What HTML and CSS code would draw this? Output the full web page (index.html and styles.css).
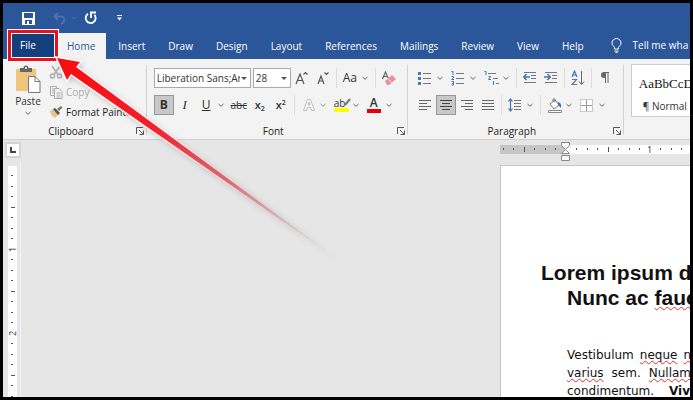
FILE: index.html
```html
<!DOCTYPE html>
<html lang="en">
<head>
  <meta charset="UTF-8">
  <meta name="viewport" content="width=device-width, initial-scale=1.0">
  <title>Word - File tab</title>
  <link rel="stylesheet" href="styles.css">
</head>
<body>
  <!-- shared icons -->
  <svg class="defs" aria-hidden="true">
    <symbol id="chevron" viewBox="0 0 8 8"><path d="M1.500 3l2.500 2.300L6.500 3" fill="none" stroke="#666"/></symbol>
    <symbol id="launcher" viewBox="0 0 8 8"><path d="M.5 7V.5H7M3 3l4 4M7.500 3.500v4h-4" fill="none" stroke="#555"/></symbol>
  </svg>

  <div class="window">
    <header class="titlebar">
      <button class="quick" aria-label="Save">
        <svg width="13" height="13" viewBox="0 0 13 13"><path fill="#fff" fill-rule="evenodd" d="M0 0h13v13H0zM2 1v5h9V1zM3 8v4h2V9h2v3h3V8z"/></svg>
      </button>
      <button class="quick undo" aria-label="Undo">
        <svg width="14" height="13" viewBox="0 0 14 13"><path d="M5 1L1.500 4.500 5 8M2 4.500h6.500a3.500 3.500 0 0 1 1 6.500L8 12" fill="none" stroke="#4a70b2" stroke-width="2"/></svg>
        <svg width="8" height="8"><path d="M2 3l2 2 2-2" fill="none" stroke="#4a70b2"/></svg>
      </button>
      <button class="quick" aria-label="Repeat">
        <svg width="14" height="14" viewBox="0 0 14 14"><path d="M4 2.800a5 5 0 1 0 6.500 1M7 7V1.500h5" fill="none" stroke="#fff" stroke-width="1.800"/></svg>
      </button>
      <button class="quick" aria-label="Customize Quick Access Toolbar">
        <svg width="7" height="8" viewBox="0 0 7 8"><path d="M1 1.500h5" stroke="#fff"/><path d="M1 3.500h5L3.500 6.500z" fill="#fff"/></svg>
      </button>
    </header>

    <nav class="tabs">
      <a href="#" class="tab file">File</a>
      <a href="#" class="tab active">Home</a>
      <a href="#" class="tab">Insert</a>
      <a href="#" class="tab">Draw</a>
      <a href="#" class="tab">Design</a>
      <a href="#" class="tab">Layout</a>
      <a href="#" class="tab">References</a>
      <a href="#" class="tab">Mailings</a>
      <a href="#" class="tab">Review</a>
      <a href="#" class="tab">View</a>
      <a href="#" class="tab">Help</a>
      <a href="#" class="tab tell">
        <svg width="11" height="15" viewBox="0 0 11 15"><path d="M3.500 11V9.500C3 8 1 7.500 1 5a4.500 4.500 0 0 1 9 0c0 2.500-2 3-2.500 4.500V11zM3.500 13h4M4.500 14.500h2" fill="none" stroke="#fff"/></svg>
        Tell me wha
      </a>
    </nav>

    <section class="ribbon">
      <div class="group">
        <div class="clipboard">
          <button class="paste">
            <svg width="26" height="28" viewBox="0 0 26 28">
              <path d="M1 4h20v22H1z" fill="#eec57d"/>
              <path d="M5 7V3h3.500a2.500 2.500 0 0 1 5 0H17v4z" fill="#666"/><circle cx="11" cy="3" r="1" fill="#fff"/>
              <path d="M13.500 11.500H20l5 5v11H13.500z" fill="#fff" stroke="#777"/><path d="M20 11.500v5h5" fill="none" stroke="#777"/>
            </svg>
            <span>Paste</span>
            <svg width="8" height="8"><use href="#chevron"/></svg>
          </button>
          <div class="clip-list">
            <button class="clip off">
              <svg width="14" height="14" viewBox="0 0 14 14" fill="none" stroke="#aaa" stroke-width="1.500"><path d="M3 1l6 8.500M11 1L5 9.500"/><circle cx="3.500" cy="11" r="2"/><circle cx="10.500" cy="11" r="2"/></svg>
            </button>
            <button class="clip off">
              <svg width="14" height="14" viewBox="0 0 14 14" fill="#f6f6f6" stroke="#aaa"><path d="M1.500 1.500h6v9h-6zM3 4h3M3 6h3M3 8h3"/><path d="M5.500 3.500H10l3 3v7H5.500zM7.500 8h4M7.500 10h4M7.500 12h4"/></svg>
              Copy
            </button>
            <button class="clip">
              <svg width="14" height="14" viewBox="0 0 14 14"><path d="M1 6l4-2 5 5-4 4q-4-2-5-7z" fill="#eec08a"/><path d="M4 4l2-1 5 5-2 2z" fill="#555"/><path d="M8 4l4-3 1.500 1.500L10 6z" fill="#777"/></svg>
              Format Painter
            </button>
          </div>
        </div>
        <div class="caption"><span>Clipboard</span><button class="launch" aria-label="Clipboard settings"><svg width="8" height="8"><use href="#launcher"/></svg></button></div>
      </div>

      <div class="group">
        <div class="rows">
          <div class="row">
            <div class="combo family"><select aria-label="Font"><option>Liberation Sans;Ar</option></select></div>
            <div class="combo size"><select aria-label="Font size"><option>28</option></select></div>
            <button class="btn" aria-label="Increase font size">
              <svg width="16" height="16" viewBox="0 0 16 16" fill="none" stroke="#555" stroke-width="1.200"><path d="M2 14L6 4l4 10M3.500 10.500h5"/><path d="M9.500 4.500l2-2 2 2"/></svg>
            </button>
            <button class="btn" aria-label="Decrease font size">
              <svg width="16" height="16" viewBox="0 0 16 16" fill="none" stroke="#555" stroke-width="1.200"><path d="M3 14l3-8 3 8M4.500 11h3.500"/><path d="M9.500 2.500l2 2 2-2"/></svg>
            </button>
            <i class="sep"></i>
            <button class="split" aria-label="Change case"><span class="case">Aa</span><svg width="8" height="8"><use href="#chevron"/></svg></button>
            <i class="sep"></i>
            <button class="btn" aria-label="Clear formatting">
              <svg width="16" height="16" viewBox="0 0 16 16"><path d="M1.500 9l3-7 3 7M2.500 6.500h4" fill="none" stroke="#666" stroke-width="1.200"/><path d="M4 11l7-6 4 4-7 6H6z" fill="#e8909d"/><path d="M6.500 8.500l4 4" stroke="#fff"/></svg>
            </button>
          </div>
          <div class="row">
            <button class="btn on bold" aria-pressed="true">B</button>
            <button class="btn italic">I</button>
            <button class="split"><span class="underline">U</span><svg width="8" height="8"><use href="#chevron"/></svg></button>
            <button class="btn strike">abc</button>
            <button class="btn script">x<sub>2</sub></button>
            <button class="btn script">x<sup>2</sup></button>
            <i class="sep"></i>
            <button class="split off" aria-label="Text effects">
              <svg width="16" height="16" viewBox="0 0 16 16"><path d="M2.500 13.500l4-11h3l4 11h-3l-1-3h-3l-1 3zM7 8h2L8 5z" fill="#fff" stroke="#a5a5a5"/></svg>
              <svg width="8" height="8"><use href="#chevron"/></svg>
            </button>
            <button class="split" aria-label="Highlight color">
              <span class="mark"><span>ab</span><svg width="8" height="9" viewBox="0 0 8 9"><path d="M7 1L2 7" stroke="#777" stroke-width="2"/></svg></span>
              <svg width="8" height="8"><use href="#chevron"/></svg>
            </button>
            <button class="split" aria-label="Font color"><span class="ink">A</span><svg width="8" height="8"><use href="#chevron"/></svg></button>
          </div>
        </div>
        <div class="caption"><span>Font</span><button class="launch" aria-label="Font settings"><svg width="8" height="8"><use href="#launcher"/></svg></button></div>
      </div>

      <div class="group">
        <div class="rows">
          <div class="row">
            <button class="split" aria-label="Bullets">
              <svg width="14" height="14" viewBox="0 0 14 14"><path d="M0 1h3v3H0zM0 6h3v3H0zM0 11h3v3H0z" fill="#4b77ad"/><path d="M5 2.500h8M5 7.500h8M5 12.500h8" stroke="#777"/></svg>
              <svg width="8" height="8"><use href="#chevron"/></svg>
            </button>
            <button class="split" aria-label="Numbering">
              <svg width="14" height="16" viewBox="0 0 14 16"><path d="M.5 1.500H2V5M.5 6.500h2v1.500l-2 1.500h2.500M.5 11.500h2v3.500h-2M1 13.500h1" fill="none" stroke="#4b77ad"/><path d="M5 3.500h8M5 8.500h8M5 13.500h8" stroke="#777"/></svg>
              <svg width="8" height="8"><use href="#chevron"/></svg>
            </button>
            <button class="split" aria-label="Multilevel list">
              <svg width="16" height="16" viewBox="0 0 16 16"><path d="M.5 1.500H2V5M4.500 6.500h2l-2 3h2.500M9.500 11v4" fill="none" stroke="#4b77ad"/><path d="M4 3.500h8M9 8.500h5M12 13.500h3" stroke="#777"/></svg>
              <svg width="8" height="8"><use href="#chevron"/></svg>
            </button>
            <i class="sep"></i>
            <button class="btn" aria-label="Decrease indent">
              <svg width="14" height="14" viewBox="0 0 14 14"><path d="M1 1.500h12M8 4.500h5M8 7.500h5M1 11.500h12" stroke="#777"/><path d="M7 6H1M3.500 3L.8 6l2.700 3" fill="none" stroke="#3c78b4" stroke-width="1.500"/></svg>
            </button>
            <button class="btn" aria-label="Increase indent">
              <svg width="14" height="14" viewBox="0 0 14 14"><path d="M1 1.500h12M8 4.500h5M8 7.500h5M1 11.500h12" stroke="#777"/><path d="M0 6h6M3.500 3l2.700 3-2.700 3" fill="none" stroke="#3c78b4" stroke-width="1.500"/></svg>
            </button>
            <i class="sep"></i>
            <button class="btn" aria-label="Sort">
              <svg width="14" height="16" viewBox="0 0 14 16" fill="none"><path d="M1 7l2.500-6L6 7M2 5h3" stroke="#3c78b4" stroke-width="1.200"/><path d="M1 9.500h4.500L1 14.500h5" stroke="#7a6aa0" stroke-width="1.200"/><path d="M10.500 1v13M8 11.500l2.500 3 2.500-3" stroke="#666"/></svg>
            </button>
            <i class="sep"></i>
            <button class="btn" aria-label="Show paragraph marks">
              <svg width="10" height="14" viewBox="0 0 10 14"><path d="M5 1.500h4M5.500 1v11M8 1v11" stroke="#666"/><path d="M5.500 1v6H4a3 3 0 0 1 0-6z" fill="#666"/></svg>
            </button>
          </div>
          <div class="row">
            <button class="btn" aria-label="Align left"><svg width="14" height="12"><path d="M1 1.500h12M1 4.500h8M1 7.500h12M1 10.500h8" stroke="#666"/></svg></button>
            <button class="btn on" aria-label="Center" aria-pressed="true"><svg width="14" height="12"><path d="M1 1.500h12M3 4.500h8M1 7.500h12M3 10.500h8" stroke="#444"/></svg></button>
            <button class="btn" aria-label="Align right"><svg width="14" height="12"><path d="M1 1.500h12M5 4.500h8M1 7.500h12M5 10.500h8" stroke="#666"/></svg></button>
            <button class="btn" aria-label="Justify"><svg width="14" height="12"><path d="M1 1.500h12M1 4.500h12M1 7.500h12M1 10.500h12" stroke="#666"/></svg></button>
            <i class="sep"></i>
            <button class="split" aria-label="Line spacing">
              <svg width="14" height="14" viewBox="0 0 14 14" fill="none"><path d="M2.500 1v12M.5 3.500l2-2.500 2 2.500M.5 10.500l2 2.500 2-2.500" stroke="#3c78b4" stroke-width="1.200"/><path d="M6 2.500h7M6 5.500h7M6 8.500h7M6 11.500h7" stroke="#777"/></svg>
              <svg width="8" height="8"><use href="#chevron"/></svg>
            </button>
            <i class="sep"></i>
            <button class="split" aria-label="Shading">
              <svg width="16" height="15" viewBox="0 0 16 15"><path d="M3 6l5-4 4 5-5 4zM6 4V1h2v3" fill="#fff" stroke="#777"/><path d="M11 4q4 1 3 6l-3-3z" fill="#3c78b4"/><path d="M1.500 12.500h13v2h-13z" fill="#fff" stroke="#888"/></svg>
              <svg width="8" height="8"><use href="#chevron"/></svg>
            </button>
            <button class="split" aria-label="Borders">
              <svg width="13" height="13" viewBox="0 0 13 13"><path d="M.5.5h12v12H.5z" fill="#fff" stroke="#999" stroke-dasharray="1 1"/><path d="M6.500 1v11M1 6.500h11" stroke="#999"/></svg>
              <svg width="8" height="8"><use href="#chevron"/></svg>
            </button>
          </div>
        </div>
        <div class="caption"><span>Paragraph</span><button class="launch" aria-label="Paragraph settings"><svg width="8" height="8"><use href="#launcher"/></svg></button></div>
      </div>

      <div class="group styles">
        <button class="style-card"><span class="sample">AaBbCcD</span><span>¶ Normal</span></button>
      </div>
    </section>

    <main class="workspace">
      <div class="corner">
        <button class="tabstop" aria-label="Tab stop"><svg width="6" height="6"><path d="M1 0v5h5" fill="none" stroke="#444" stroke-width="2"/></svg></button>
      </div>
      <svg class="hruler" height="22">
        <defs>
          <pattern id="hticks" width="84" height="9" patternUnits="userSpaceOnUse" x="66" y="5">
            <path d="M10 4h1M21 4h1M31 4h1M52 4h1M63 4h1M73 4h1" stroke="#555" stroke-width="2"/>
            <path d="M42.500 2v5" stroke="#555"/>
          </pattern>
        </defs>
        <rect y="5" width="66" height="9" fill="#c6c6c6"/>
        <rect x="66" y="5" width="100%" height="9" fill="#fff"/>
        <rect y="5" width="100%" height="9" fill="url(#hticks)"/>
        <text x="147" y="13" class="ruler-num">1</text>
        <path d="M61.500 2.500h8v3l-4 4-4-4zM65.500 9.500l4 4h-8zM61.500 15.500h8v5h-8z" fill="#fff" stroke="#888"/>
      </svg>
      <svg class="vruler" width="18">
        <defs>
          <pattern id="vticks" width="9" height="84" patternUnits="userSpaceOnUse" x="5" y="3">
            <path d="M4 10v1M4 21v1M4 31v1M4 52v1M4 63v1M4 73v1" stroke="#555" stroke-width="2"/>
            <path d="M3 42.500h4" stroke="#555"/>
          </pattern>
        </defs>
        <rect x="5" y="4" width="9" height="100%" fill="#fff"/>
        <rect x="5" y="4" width="9" height="100%" fill="url(#vticks)"/>
        <text transform="translate(13 90) rotate(-90)" class="ruler-num">1</text>
        <text transform="translate(13 174) rotate(-90)" class="ruler-num">2</text>
      </svg>
      <article class="page">
        <h1>Lorem ipsum d<br><span>Nunc ac <u>fauc</u></span></h1>
        <div class="text">
          <p class="line snug"><span>Vestibulum</span><u>neque</u><u>n</u></p>
          <p class="line"><u>varius</u><span>sem.</span><u>Nullam</u></p>
          <p class="line loose"><span><u>condimentum</u>.</span><b><u>Viv</u></b></p>
        </div>
      </article>
    </main>

    <!-- callout over the File tab -->
    <div class="callout"></div>
    <svg class="arrow" width="300" height="220" viewBox="50 50 300 220">
      <defs>
        <linearGradient id="fade" gradientUnits="userSpaceOnUse" x1="56" y1="57" x2="340" y2="260">
          <stop offset="0" stop-color="#f80d0d"/>
          <stop offset=".35" stop-color="#f02030"/>
          <stop offset=".6" stop-color="#d84c5c" stop-opacity=".8"/>
          <stop offset=".85" stop-color="#c08088" stop-opacity=".25"/>
          <stop offset="1" stop-color="#bbb" stop-opacity="0"/>
        </linearGradient>
        <linearGradient id="edge" gradientUnits="userSpaceOnUse" x1="56" y1="57" x2="340" y2="260">
          <stop offset="0" stop-color="#fff"/>
          <stop offset=".4" stop-color="#ffe8e0"/>
          <stop offset=".8" stop-color="#f0c8c8" stop-opacity=".2"/>
          <stop offset="1" stop-color="#ddd" stop-opacity="0"/>
        </linearGradient>
        <filter id="soft"><feGaussianBlur stdDeviation="3"/></filter>
      </defs>
      <path d="M58 60l25 4-5 6L340 261 73 77l-4 6z" fill="#555" opacity=".4" filter="url(#soft)"/>
      <path d="M57 58l23 4-4 5L340 261 71 74l-4 6z" fill="url(#fade)" stroke="url(#edge)" stroke-width="3" paint-order="stroke"/>
    </svg>
  </div>
</body>
</html>
```
FILE: styles.css
```css
* {
  box-sizing: border-box;
}

body {
  margin: 0;
  background: #000;
  color: #333;
  font-family: 'Open Sans', 'Noto Sans', sans-serif;
  font-size: 10px;
  line-height: 14px;
}

button {
  padding: 0;
  border: none;
  background: none;
  color: inherit;
  font: inherit;
  cursor: pointer;
}

svg {
  display: block;
  flex: none;
}

.defs {
  position: absolute;
  width: 0;
  height: 0;
}

.window {
  position: relative;
  display: flex;
  flex-direction: column;
  height: 100vh;
  border: 3px solid #000;
  overflow: hidden;
  white-space: nowrap;
}

/* title bar and tabs */
.titlebar {
  display: flex;
  align-items: center;
  gap: 18px;
  height: 30px;
  flex: none;
  padding: 0 19px;
  background: #2b579a;
}

.quick {
  display: flex;
  align-items: center;
}

.undo {
  gap: 3px;
  margin-right: -12px;
}

.tabs {
  display: flex;
  flex: none;
  height: 26px;
  padding-left: 7px;
  background: #2b579a;
}

.tab {
  flex: none;
  padding: 6px 11px 6px 12px;
  color: #fff;
  text-decoration: none;
}

.tab.file {
  width: 47px;
  padding: 5px 10px;
  background: #133f7c;
}

.tab.active {
  padding: 6px 11px 6px 10px;
  background: #f3f3f3;
  color: #2b579a;
}

.tab.tell {
  display: flex;
  gap: 11px;
  padding: 5px 0 5px 16px;
}

/* ribbon */
.ribbon {
  display: flex;
  flex: none;
  background: #f3f3f3;
  border-bottom: 1px solid #d0d0d0;
}

.group {
  display: flex;
  flex: none;
  flex-direction: column;
  justify-content: space-between;
  height: 80px;
  background: linear-gradient(#d0d0d0, #d0d0d0) right 6px / 1px 70px no-repeat;
}

.caption {
  display: flex;
  align-items: center;
  height: 16px;
  padding: 0 3px;
  color: #222;
}

.caption span {
  flex: 1;
  text-align: center;
}

.clipboard {
  display: flex;
  gap: 5px;
  padding: 6px 11px 0 9px;
}

.paste {
  display: flex;
  flex-direction: column;
  align-items: center;
  gap: 1px;
  width: 32px;
}

.clip-list {
  display: flex;
  flex-direction: column;
  gap: 6px;
}

.clip {
  display: flex;
  gap: 3px;
  color: #222;
}

.off {
  color: #aaa;
}

.rows {
  display: flex;
  flex-direction: column;
  gap: 7px;
  padding: 9px 9px 0 7px;
}

.row {
  display: flex;
  gap: 1px;
  height: 20px;
}

.btn {
  display: flex;
  align-items: center;
  justify-content: center;
  width: 20px;
}

.on {
  background: #c8c8c8;
  border: 1px solid #979797;
}

.split {
  display: flex;
  align-items: center;
  justify-content: space-between;
  width: 32px;
  padding: 0 3px;
}

.split.off {
  opacity: 0.7;
}

.sep {
  width: 1px;
  margin: 0 2px;
  background: #dcdcdc;
}

.combo {
  position: relative;
  background: #fff;
  border: 1px solid #aaa;
}

.combo select {
  width: 100%;
  height: 18px;
  padding: 0 10px 0 2px;
  border: none;
  background: none;
  appearance: none;
  color: #333;
  font: inherit;
  overflow: hidden;
}

.combo::after {
  content: '';
  position: absolute;
  top: 8px;
  right: 3px;
  border: 3px solid transparent;
  border-top-color: #555;
  border-bottom: none;
}

.family {
  width: 97px;
}

.size {
  width: 38px;
  margin-left: 1px;
}

.case {
  font-size: 12px;
}

.bold {
  font-size: 12px;
  font-weight: bold;
}

.italic {
  font-family: 'Liberation Serif', serif;
  font-size: 13px;
  font-style: italic;
}

.underline {
  padding-left: 3px;
  font-size: 12px;
  text-decoration: underline;
}

.strike {
  text-decoration: line-through;
}

.script {
  font-size: 11px;
  font-weight: 600;
}

.script sub,
.script sup {
  font-size: 7px;
  line-height: 7px;
}

.script sub {
  align-self: flex-end;
  margin-bottom: 3px;
}

.script sup {
  align-self: flex-start;
  margin-top: 4px;
}

.mark {
  display: flex;
  width: 15px;
  border-bottom: 4px solid #ff0;
  line-height: 10px;
}

.mark svg {
  margin-left: -2px;
}

.ink {
  width: 14px;
  border-bottom: 4px solid #e80000;
  font-size: 12px;
  font-weight: 600;
  line-height: 12px;
  text-align: center;
}

.styles {
  justify-content: flex-start;
  padding: 5px 0 0 7px;
}

.style-card {
  display: flex;
  flex-direction: column;
  align-items: flex-start;
  gap: 8px;
  width: 80px;
  height: 53px;
  padding: 12px 7px 0;
  background: #fff;
  border: 1px solid #ccc;
}

.style-card span + span {
  padding-left: 4px;
}

.sample {
  color: #111;
  font-family: 'Liberation Serif', serif;
  font-size: 13px;
}

/* document area */
.workspace {
  display: grid;
  flex: 1;
  grid-template-columns: 18px minmax(0, 1fr) minmax(0, 190px);
  grid-template-rows: 22px minmax(0, 1fr);
  min-height: 0;
  background: #e6e6e6;
}

.corner {
  padding: 2px 0 0 2px;
}

.tabstop {
  display: flex;
  align-items: center;
  justify-content: center;
  width: 16px;
  height: 16px;
  background: #fff;
  border: 2px solid #d4d4d4;
}

.hruler {
  grid-column: 3;
  width: 100%;
}

.vruler {
  grid-column: 1;
  grid-row: 2;
  height: 100%;
  border-right: 1px solid #f2f2f2;
}

.ruler-num {
  fill: #333;
  font-size: 9px;
}

.page {
  grid-column: 3;
  grid-row: 2;
  margin-top: 3px;
  padding: 94px 0 0 66px;
  background: #fff;
  border-top: 1px solid #c6c6c6;
  border-left: 1px solid #c6c6c6;
  color: #111;
  overflow: hidden;
}

.page h1 {
  margin: 0 0 36px;
  font-family: 'Liberation Sans', sans-serif;
  font-size: 21px;
  line-height: 25px;
  text-indent: -26px;
}

.page h1 span {
  display: block;
  text-indent: 0;
}

.page u {
  text-decoration: underline wavy #e03030 1px;
  text-decoration-skip-ink: none;
}

.text {
  font-family: 'DejaVu Sans', sans-serif;
  font-size: 12px;
  line-height: 18px;
}

.line {
  display: flex;
  gap: 8px;
  margin: 0;
}

.snug {
  gap: 6px;
}

.loose {
  gap: 15px;
}

/* callout */
.callout {
  position: absolute;
  top: 27px;
  left: 5px;
  width: 50px;
  height: 31px;
  border: 3px solid #e8101a;
  outline: 1px solid #fff;
  box-shadow: inset 0 0 0 1px #fff;
  pointer-events: none;
}

.arrow {
  position: absolute;
  top: 47px;
  left: 47px;
  pointer-events: none;
}
```
